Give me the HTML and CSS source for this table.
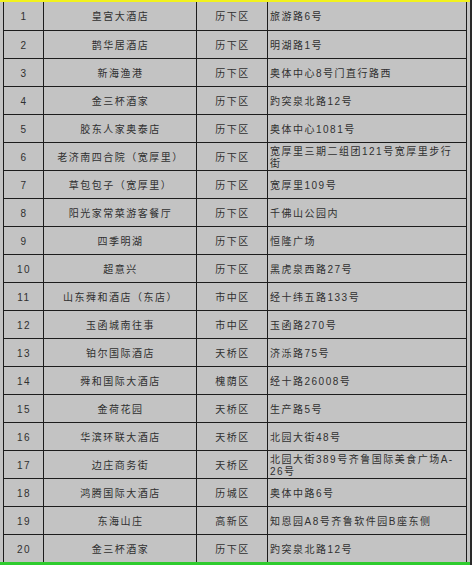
FILE: index.html
```html
<!DOCTYPE html>
<html lang="zh">
<head>
<meta charset="utf-8">
<link rel="stylesheet" href="styles.css">
</head>
<body>
<div class="sheet">
  <div class="top-strip"></div>
  <table class="grid">
    <colgroup>
      <col class="c-no"><col class="c-name"><col class="c-dist"><col class="c-addr">
    </colgroup>
    <tbody>
      <tr><td class="ctr">1</td><td class="ctr">皇宫大酒店</td><td class="ctr">历下区</td><td>旅游路6号</td></tr>
      <tr><td class="ctr">2</td><td class="ctr">鹊华居酒店</td><td class="ctr">历下区</td><td>明湖路1号</td></tr>
      <tr><td class="ctr">3</td><td class="ctr">新海渔港</td><td class="ctr">历下区</td><td>奥体中心8号门直行路西</td></tr>
      <tr><td class="ctr">4</td><td class="ctr">金三杯酒家</td><td class="ctr">历下区</td><td>趵突泉北路12号</td></tr>
      <tr><td class="ctr">5</td><td class="ctr">胶东人家奥泰店</td><td class="ctr">历下区</td><td>奥体中心1081号</td></tr>
      <tr><td class="ctr">6</td><td class="ctr">老济南四合院（宽厚里）</td><td class="ctr">历下区</td><td>宽厚里三期二组团121号宽厚里步行<br>街</td></tr>
      <tr><td class="ctr">7</td><td class="ctr">草包包子（宽厚里）</td><td class="ctr">历下区</td><td>宽厚里109号</td></tr>
      <tr><td class="ctr">8</td><td class="ctr">阳光家常菜游客餐厅</td><td class="ctr">历下区</td><td>千佛山公园内</td></tr>
      <tr><td class="ctr">9</td><td class="ctr">四季明湖</td><td class="ctr">历下区</td><td>恒隆广场</td></tr>
      <tr><td class="ctr">10</td><td class="ctr">超意兴</td><td class="ctr">历下区</td><td>黑虎泉西路27号</td></tr>
      <tr><td class="ctr">11</td><td class="ctr">山东舜和酒店（东店）</td><td class="ctr">市中区</td><td>经十纬五路133号</td></tr>
      <tr><td class="ctr">12</td><td class="ctr">玉函城南往事</td><td class="ctr">市中区</td><td>玉函路270号</td></tr>
      <tr><td class="ctr">13</td><td class="ctr">铂尔国际酒店</td><td class="ctr">天桥区</td><td>济泺路75号</td></tr>
      <tr><td class="ctr">14</td><td class="ctr">舜和国际大酒店</td><td class="ctr">槐荫区</td><td>经十路26008号</td></tr>
      <tr><td class="ctr">15</td><td class="ctr">金荷花园</td><td class="ctr">天桥区</td><td>生产路5号</td></tr>
      <tr><td class="ctr">16</td><td class="ctr">华滨环联大酒店</td><td class="ctr">天桥区</td><td>北园大街48号</td></tr>
      <tr><td class="ctr">17</td><td class="ctr">边庄商务街</td><td class="ctr">天桥区</td><td>北园大街389号齐鲁国际美食广场A-<br>26号</td></tr>
      <tr><td class="ctr">18</td><td class="ctr">鸿腾国际大酒店</td><td class="ctr">历城区</td><td>奥体中路6号</td></tr>
      <tr><td class="ctr">19</td><td class="ctr">东海山庄</td><td class="ctr">高新区</td><td>知恩园A8号齐鲁软件园B座东侧</td></tr>
      <tr><td class="ctr">20</td><td class="ctr">金三杯酒家</td><td class="ctr">历下区</td><td>趵突泉北路12号</td></tr>
    </tbody>
  </table>
  <div class="bottom-strip"></div>
</div>
</body>
</html>
```
FILE: styles.css
```css
html, body {
  margin: 0;
  padding: 0;
  background: #c3c3c3;
}
.sheet {
  width: 472px;
  height: 565px;
  box-sizing: border-box;
  border-right: 2px solid #2a2a2a;
  background: #c3c3c3;
  overflow: hidden;
  font-family: "Liberation Sans", "Noto Sans CJK SC", sans-serif;
  font-size: 10px;
  color: #303030;
}
.top-strip {
  height: 2px;
  background: #f2f21e;
}
.bottom-strip {
  height: 3px;
  background: #2ecc2e;
}
.grid {
  margin-left: 3px;
  border-collapse: collapse;
  table-layout: fixed;
  width: 463px;
}
.c-no { width: 40px; }
.c-name { width: 153px; }
.c-dist { width: 71px; }
.c-addr { width: 199px; }
.grid td {
  border: 1px solid #1c1c1c;
  height: 28px;
  padding: 3px 0 0 2px;
  box-sizing: border-box;
  line-height: 12px;
  letter-spacing: 1.5px;
  vertical-align: middle;
  white-space: nowrap;
}
.grid tr:first-child td {
  border-top: none;
}
.grid tr:last-child td {
  border-bottom: none;
}
.grid td.ctr {
  text-align: center;
  padding-left: 1px;
}
```
